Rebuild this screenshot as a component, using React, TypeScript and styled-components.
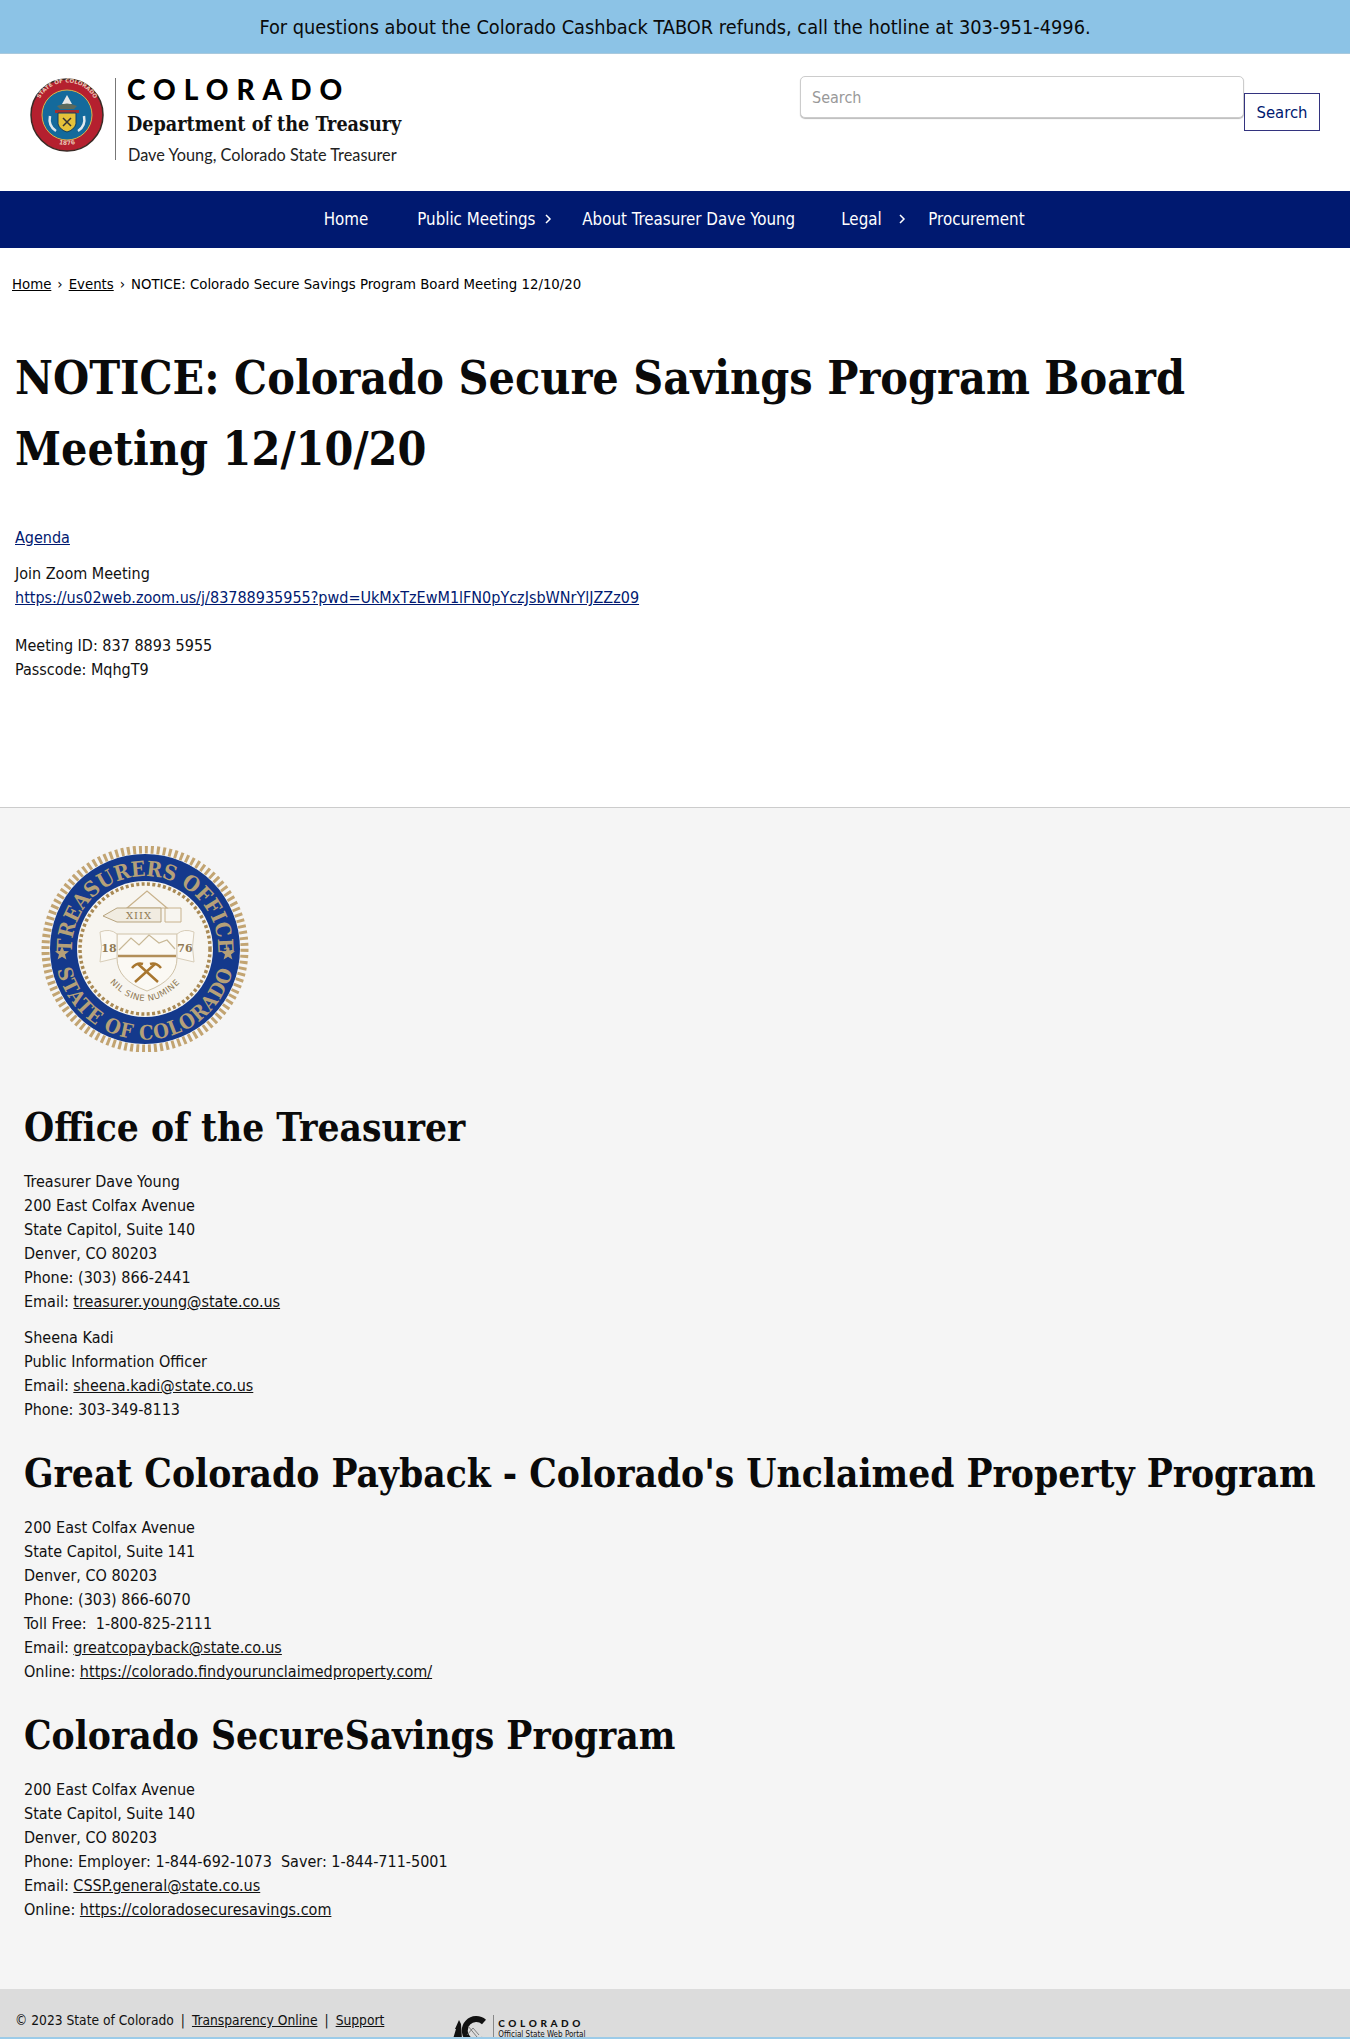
import React from "react";
import styled, { createGlobalStyle } from "styled-components";

const Global = createGlobalStyle`
  html, body { margin: 0; padding: 0; background: #fff; }
  body { font-family: "DejaVu Sans Condensed", "DejaVu Sans", sans-serif; font-size: 16px; line-height: 24px; color: #111; }
  a { color: inherit; }
`;
const Page = styled.div`height: 2039px; overflow: hidden; position: relative;`;
const Banner = styled.div`height: 51px; padding-top: 2px; box-sizing: content-box; background: #8cc3e6; border-bottom: 1px solid #a9c9dd; display: flex; align-items: center; justify-content: center; font-size: 19.8px; color: #0a0a0a;`;
const Header = styled.header`height: 137px; display: flex; justify-content: space-between; padding: 22px 30px 0 30px; box-sizing: border-box;`;
const Brand = styled.div`display: flex; align-items: flex-start; margin-top: 2px;`;
const BrandRule = styled.div`width: 1px; height: 82px; background: #777; margin: 0 11px;`;
const BrandText = styled.div`display: flex; flex-direction: column;`;
const Wordmark = styled.div`font-family: Lato, sans-serif; font-weight: 900; font-size: 28px; letter-spacing: 8px; line-height: 24px; color: #000; margin-top: -1px;`;
const Dept = styled.div`font-family: "DejaVu Serif Condensed", "DejaVu Serif", serif; font-weight: 700; font-size: 19.6px; line-height: 24px; margin-top: 12px; color: #111;`;
const Treasurer = styled.div`font-family: Lato, sans-serif; font-size: 16.3px; line-height: 20px; margin-top: 8px; margin-left: 1px; color: #222;`;
const SearchForm = styled.form`display: flex; align-items: flex-start;`;
const SearchInput = styled.input`width: 444px; height: 42px; box-sizing: border-box; border: 1px solid #ccc; border-radius: 5px; box-shadow: 0 1px 1px #bbb; padding: 0 11px; font: inherit; font-size: 16px; &::placeholder { color: #999; }`;
const SearchButton = styled.button`width: 76px; height: 38px; margin-top: 17px; box-sizing: border-box; background: #fff; border: 1px solid #33337f; color: #001970; font: inherit; font-size: 16.5px; padding: 1px 0 0;`;
const Nav = styled.nav`height: 57px; background: #001970; display: flex; align-items: center; justify-content: center; color: #fff; font-size: 16.8px; padding-bottom: 1px; box-sizing: border-box;`;
const NavItem = styled.div<{ $w: number; $gap?: number }>`display: flex; align-items: center; width: ${p => p.$w}px; gap: ${p => p.$gap ?? 0}px;`;
const Crumbs = styled.div`padding: 24px 12px 0; font-size: 14.8px; display: flex; gap: 6px; color: #000;`;
const Main = styled.main`padding: 47px 15px 0; height: 511px; box-sizing: border-box;`;
const H1 = styled.h1`font-family: "DejaVu Serif Condensed", "DejaVu Serif", serif; font-weight: 700; font-size: 46.2px; line-height: 71px; margin: 0 0 41px; color: #0a0a0a;`;
const P = styled.p`margin: 0 0 12px;`;
const BlueLink = styled.a`color: #001970;`;
const Footer = styled.footer`background: #f5f5f5; border-top: 1px solid #ccc; height: 1182px; box-sizing: border-box; padding: 38px 0 0 24px;`;
const SealWrap = styled.div`margin: 0 0 48px 16px; line-height: 0;`;
const H2 = styled.h2`font-family: "DejaVu Serif Condensed", "DejaVu Serif", serif; font-weight: 700; font-size: 38.5px; line-height: 56px; margin: 0 0 14px; color: #0a0a0a; white-space: nowrap;`;
const Block = styled.p`margin: 0 0 12px;`;
const Section = styled.div`margin-bottom: 24px;`;
const BottomBar = styled.div`height: 50px; background: #dcdcdc; display: flex; padding: 19px 0 0 15px; box-sizing: border-box; font-size: 13.7px; position: relative; white-space: pre;`;
const Sep = styled.span`margin: 0 7px;`;
const PortalLogo = styled.div`display: flex; margin-left: 69px; margin-top: 7px;`;
const PortalRule = styled.div`width: 1px; height: 26px; background: #888; margin: 0 4px 0 7px;`;
const PortalText = styled.div`display: flex; flex-direction: column; padding-top: 2px;`;
const PortalName = styled.div`font-family: Lato, sans-serif; font-weight: 900; font-size: 10px; letter-spacing: 3.6px; line-height: 12px;`;
const PortalSub = styled.div`font-size: 8px; line-height: 10px; margin-top: 1px;`;
const BottomLine = styled.div`position: absolute; left: 0; right: 0; bottom: 0; height: 2px; background: #9ccbe8;`;

const StateSeal = () => (
  <svg width="74" height="74" viewBox="0 0 74 74" aria-label="State of Colorado seal">
    <defs>
      <path id="stateTop" d="M 7.5 45 A 31 31 0 1 1 66.5 45" />
      <path id="stateBot" d="M 22 63 A 30 30 0 0 0 52 63" />
    </defs>
    <circle cx="37" cy="37" r="36" fill="#b5202f" stroke="#3a2a25" strokeWidth="1.5" />
    <circle cx="37" cy="37" r="25" fill="#146a9c" stroke="#d8b64c" />
    <text fontFamily="'DejaVu Sans', sans-serif" fontWeight="700" fontSize="5.6" fill="#e9c7b4">
      <textPath href="#stateTop" startOffset="50%" textAnchor="middle">STATE OF COLORADO</textPath>
    </text>
    <text fontFamily="'DejaVu Sans', sans-serif" fontWeight="700" fontSize="6" fill="#e9c7b4">
      <textPath href="#stateBot" startOffset="50%" textAnchor="middle">1876</textPath>
    </text>
    <path d="M37 17 l5 9 h-10 z" fill="#e8e8e8" />
    <path d="M27 28 q10-5 20 0 l-3 3 h-14z" fill="#5d6a5c" />
    <path d="M25 32 h24 v3 h-24z" fill="#a23030" />
    <path d="M28 35 h18 v11 q-2 6-9 8 q-7-2-9-8z" fill="#e5c23a" stroke="#0e3c62" />
    <path d="M33 40 l8 8 M41 40 l-8 8" stroke="#333" strokeWidth="1.5" />
    <path d="M20 38 q-2 10 6 15 M54 38 q2 10-6 15" stroke="#dfe8ee" strokeWidth="2.5" fill="none" />
  </svg>
);

const TreasurySeal = () => (
  <svg width="210" height="206" viewBox="0 0 210 206" aria-label="Treasurers Office seal">
    <defs>
      <path id="top" d="M 34.5 122 A 73 73 0 1 1 175.5 122" />
      <path id="bot" d="M 15.3 111 A 90 90 0 0 0 194.7 111" />
      <path id="motto" d="M 60 125 Q 105 185 150 125" />
    </defs>
    <circle cx="105" cy="103" r="99.5" fill="none" stroke="#c2a472" strokeWidth="8" strokeDasharray="3 3" />
    <circle cx="105" cy="103" r="95" fill="#14398c" />
    <circle cx="105" cy="103" r="68" fill="#f7f5f0" />
    <circle cx="105" cy="103" r="65" fill="none" stroke="#a98a55" strokeWidth="3.5" strokeDasharray="3 2.4" />
    <text fontFamily="'DejaVu Serif Condensed', 'DejaVu Serif', serif" fontWeight="700" fontSize="21" fill="#b5a078">
      <textPath href="#top" startOffset="50%" textAnchor="middle">TREASURERS OFFICE</textPath>
    </text>
    <text fontFamily="'DejaVu Serif Condensed', 'DejaVu Serif', serif" fontWeight="700" fontSize="20" fill="#b5a078" letterSpacing="1">
      <textPath href="#bot" startOffset="50%" textAnchor="middle">STATE OF COLORADO</textPath>
    </text>
    <path d="M23 112 l2 5 5 .3-4 3.2 1.4 5-4.4-2.8-4.4 2.8 1.4-5-4-3.2 5-.3z" fill="#b5a078" transform="translate(-1 -12)" />
    <path d="M187 112 l2 5 5 .3-4 3.2 1.4 5-4.4-2.8-4.4 2.8 1.4-5-4-3.2 5-.3z" fill="#b5a078" transform="translate(1 -12)" />
    <path d="M87 62 l20-17 20 17z" fill="none" stroke="#c8b28c" strokeWidth="1.2" />
    <path d="M63 70 l14-8 h44 v14 h-44z" fill="#f1ece1" stroke="#b7a47f" />
    <path d="M125 62 h16 v14 h-16z" fill="none" stroke="#c8b28c" />
    <text x="99" y="73" textAnchor="middle" fontFamily="'DejaVu Serif', serif" fontSize="10" fill="#8f7a55" letterSpacing="1">XIIX</text>
    <path d="M77 88 h60 v24 q0 22-30 33 q-30-11-30-33z" fill="#fbf9f4" stroke="#cfc2a8" />
    <path d="M79 104 l12-12 8 7 10-10 10 8 8-3 8 9" fill="none" stroke="#c8b896" strokeWidth="1.2" />
    <path d="M78 110 h58" stroke="#b28f5a" strokeWidth="2.5" />
    <path d="M95 136 l20-18 M118 136 l-20-18" stroke="#a8762f" strokeWidth="2.5" fill="none" />
    <path d="M92 122 q5-6 11-4 M121 122 q-5-6-11-4" stroke="#a8762f" strokeWidth="2.5" fill="none" />
    <path d="M60 86 q10-4 17 2 v24 l-17 4 q3-15 0-30z M154 86 q-10-4-17 2 v24 l17 4 q-3-15 0-30z" fill="#fbf9f4" stroke="#d8cdb8" />
    <text x="69" y="106" textAnchor="middle" fontFamily="'DejaVu Serif', serif" fontWeight="700" fontSize="11" fill="#8f7a55">18</text>
    <text x="145" y="106" textAnchor="middle" fontFamily="'DejaVu Serif', serif" fontWeight="700" fontSize="11" fill="#8f7a55">76</text>
    <text fontFamily="'DejaVu Sans', sans-serif" fontSize="8.5" fill="#8f7a55" letterSpacing="0.6">
      <textPath href="#motto" startOffset="50%" textAnchor="middle">NIL SINE NUMINE</textPath>
    </text>
  </svg>
);

const PortalMark = () => (
  <svg width="33" height="24" viewBox="0 0 33 24" aria-label="Colorado logo">
    <path d="M0 24 L3 14 L2 14 L6 5 L8 9 L9 24z" fill="#111" />
    <path d="M31 7 A 11.5 11.5 0 1 0 31 24" fill="none" stroke="#111" strokeWidth="6" />
    <path d="M14 20 l6-7 6 7 M15 11 l9 11" stroke="#666" strokeWidth="0.8" fill="none" />
  </svg>
);

const Chevron = () => (
  <svg width="8" height="10" viewBox="0 0 8 10"><path d="M2 1l4 4-4 4" fill="none" stroke="#fff" strokeWidth="1.5" /></svg>
);

export default function App() {
  return (
    <Page>
      <Global />
      <Banner>For questions about the Colorado Cashback TABOR refunds, call the hotline at 303-951-4996.</Banner>
      <Header>
        <Brand>
          <StateSeal />
          <BrandRule />
          <BrandText>
            <Wordmark>COLORADO</Wordmark>
            <Dept>Department of the Treasury</Dept>
            <Treasurer>Dave Young, Colorado State Treasurer</Treasurer>
          </BrandText>
        </Brand>
        <SearchForm>
          <SearchInput placeholder="Search" />
          <SearchButton type="button">Search</SearchButton>
        </SearchForm>
      </Header>
      <Nav>
        <NavItem $w={93.5}>Home</NavItem>
        <NavItem $w={165} $gap={9}>Public Meetings <Chevron /></NavItem>
        <NavItem $w={259}>About Treasurer Dave Young</NavItem>
        <NavItem $w={87} $gap={16}>Legal <Chevron /></NavItem>
        <NavItem $w={98}>Procurement</NavItem>
      </Nav>
      <Crumbs><a href="#">Home</a><span>›</span><a href="#">Events</a><span>›</span><span>NOTICE: Colorado Secure Savings Program Board Meeting 12/10/20</span></Crumbs>
      <Main>
        <H1>NOTICE: Colorado Secure Savings Program Board Meeting 12/10/20</H1>
        <P><BlueLink href="#">Agenda</BlueLink></P>
        <P>Join Zoom Meeting<br /><BlueLink href="#">https://us02web.zoom.us/j/83788935955?pwd=UkMxTzEwM1lFN0pYczJsbWNrYlJZZz09</BlueLink><br /><br />Meeting ID: 837 8893 5955<br />Passcode: MqhgT9</P>
      </Main>
      <Footer>
        <SealWrap><TreasurySeal /></SealWrap>
        <Section>
          <H2>Office of the Treasurer</H2>
          <Block>Treasurer Dave Young<br />200 East Colfax Avenue<br />State Capitol, Suite 140<br />Denver, CO 80203<br />Phone: (303) 866-2441<br />Email: <a href="#">treasurer.young@state.co.us</a></Block>
          <Block>Sheena Kadi<br />Public Information Officer<br />Email: <a href="#">sheena.kadi@state.co.us</a><br />Phone: 303-349-8113</Block>
        </Section>
        <Section>
          <H2>Great Colorado Payback - Colorado's Unclaimed Property Program</H2>
          <Block>200 East Colfax Avenue<br />State Capitol, Suite 141<br />Denver, CO 80203<br />Phone: (303) 866-6070<br />Toll Free:&nbsp; 1-800-825-2111<br />Email: <a href="#">greatcopayback@state.co.us</a><br />Online: <a href="#">https://colorado.findyourunclaimedproperty.com/</a></Block>
        </Section>
        <Section>
          <H2>Colorado SecureSavings Program</H2>
          <Block>200 East Colfax Avenue<br />State Capitol, Suite 140<br />Denver, CO 80203<br />Phone: Employer: 1-844-692-1073&nbsp; Saver: 1-844-711-5001<br />Email: <a href="#">CSSP.general@state.co.us</a><br />Online: <a href="#">https://coloradosecuresavings.com</a></Block>
        </Section>
      </Footer>
      <BottomBar>
        <span>© 2023 State of Colorado</span><Sep>|</Sep><a href="#">Transparency Online</a><Sep>|</Sep><a href="#">Support</a>
        <PortalLogo>
          <PortalMark />
          <PortalRule />
          <PortalText>
            <PortalName>COLORADO</PortalName>
            <PortalSub>Official State Web Portal</PortalSub>
          </PortalText>
        </PortalLogo>
        <BottomLine />
      </BottomBar>
    </Page>
  );
}
